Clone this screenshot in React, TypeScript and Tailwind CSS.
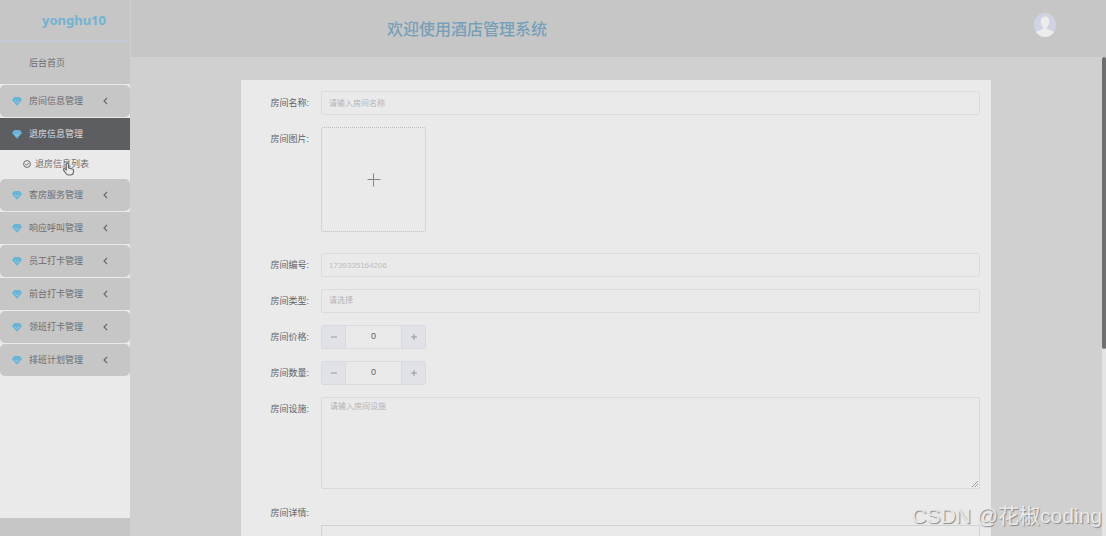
import { useState } from "react";
import clsx from "clsx";

const menus = [
  { title: "房间信息管理", rounded: true },
  { title: "退房信息管理", active: true, children: ["退房信息列表"] },
  { title: "客房服务管理", rounded: true },
  { title: "响应呼叫管理" },
  { title: "员工打卡管理", rounded: true },
  { title: "前台打卡管理" },
  { title: "领班打卡管理", rounded: true },
  { title: "排班计划管理", rounded: true },
];

const fieldClass =
  "block w-full h-6 rounded-[2px] border border-[#dcdcdf] bg-transparent px-[7px] text-[8px] text-[#77787c] outline-none placeholder:text-[#b3b4b9]";

function GemIcon() {
  return (
    <svg viewBox="0 0 20 18" className="w-[10px] h-[9px] shrink-0">
      <path d="M4.500 1h11l3.500 5-9 10.500L1 6z" fill="#66b5d8" stroke="#66b5d8" strokeWidth="2" strokeLinejoin="round" />
      <path d="M5.500 7.500l4.500 4 4.500-4" fill="none" stroke="#b4d0dc" strokeWidth="1.4" />
    </svg>
  );
}

function ChevronIcon() {
  return (
    <svg viewBox="0 0 6 10" className="w-[5px] h-2" fill="none" stroke="#66676a" strokeWidth="1.5">
      <path d="M5 1L1.2 5 5 9" />
    </svg>
  );
}

function CheckIcon() {
  return (
    <svg viewBox="0 0 16 16" className="w-2 h-2 shrink-0" fill="none" stroke="#5c5d60" strokeWidth="1.8">
      <circle cx="8" cy="8" r="6.8" />
      <path d="M4.5 7.8l2.6 2.6 4.6-4.6" />
    </svg>
  );
}

function Cursor() {
  return (
    <svg
      viewBox="0 0 20 24"
      className="absolute left-[63px] top-3 w-[11px] h-[14px]"
      fill="#ececec"
      stroke="#66676b"
      strokeWidth="2"
      strokeLinejoin="round"
    >
      <path d="M6 14V3.500a2 2 0 0 1 4 0V10l7 2a2 2 0 0 1 2 2v3c0 4-2 6-6 6h-3c-3 0-4-2-6-5l-3-4c-1-2 1-4 3-2z" />
    </svg>
  );
}

function Sidebar() {
  return (
    <aside className="w-[130px] shrink-0 bg-[#c6c6c6] pb-[18px] flex flex-col">
      <div className="h-10 shrink-0 pl-[18px] pt-0.5 flex items-center justify-center text-[13px] font-bold text-[#70b4d4] font-['Noto_Sans',sans-serif]">
        yonghu10
      </div>
      <nav className="flex-1 border-t-2 border-[#c5c8d5] bg-[#eaeaea] text-[9px] text-[#6c6d70]">
        <a href="#home" className="flex h-[42px] items-center bg-[#c6c6c6] pl-[29px] pt-0.5">
          后台首页
        </a>
        <ul className="flex flex-col gap-px pt-px">
          {menus.map((menu) => (
            <li key={menu.title}>
              <button
                type="button"
                className={clsx(
                  "flex h-8 w-full items-center pl-3",
                  menu.active ? "bg-[#5d5e62] text-[#dedee0]" : "bg-[#c6c6c6]",
                  menu.rounded && "rounded-[5px]"
                )}
              >
                <GemIcon />
                <span className="ml-[7px] w-[74px] pt-0.5 text-left">{menu.title}</span>
                {!menu.active && <ChevronIcon />}
              </button>
              {menu.children?.map((child) => (
                <a key={child} href="#list" className="relative flex h-7 items-center gap-1 pl-[23px]">
                  <CheckIcon />
                  <span className="pt-0.5">{child}</span>
                  <Cursor />
                </a>
              ))}
            </li>
          ))}
        </ul>
      </nav>
    </aside>
  );
}

function FormRow({ label, htmlFor, children }: { label: string; htmlFor: string; children: React.ReactNode }) {
  return (
    <div className="flex items-start">
      <label htmlFor={htmlFor} className="w-20 shrink-0 pr-3 text-right text-[9px] leading-6 text-[#626367]">
        {label}:
      </label>
      <div className="min-w-0 flex-1">{children}</div>
    </div>
  );
}

function NumberInput({ id }: { id: string }) {
  const [value, setValue] = useState(0);
  const buttonClass = "flex w-[23px] items-center justify-center bg-[#e1e2e8] text-[#86878b]";
  return (
    <div className="flex h-6 w-[105px] overflow-hidden rounded-[2px] border border-[#d9dae0]">
      <button type="button" aria-label="减少" className={buttonClass} onClick={() => setValue(Math.max(0, value - 1))}>
        <svg viewBox="0 0 8 8" className="w-2 h-2" stroke="currentColor" strokeWidth="0.8">
          <path d="M1 4h6" />
        </svg>
      </button>
      <input
        id={id}
        value={value}
        onChange={(e) => setValue(Number(e.target.value) || 0)}
        className="min-w-0 flex-1 border-x border-[#d9dae0] text-center text-[9px] text-[#606165] outline-none"
      />
      <button type="button" aria-label="增加" className={buttonClass} onClick={() => setValue(value + 1)}>
        <svg viewBox="0 0 8 8" className="w-2 h-2" stroke="currentColor" strokeWidth="0.8">
          <path d="M1 4h6M4 1v6" />
        </svg>
      </button>
    </div>
  );
}

function RoomForm() {
  return (
    <form className="flex flex-col gap-3 bg-[#eaeaea] pt-[11px] pr-[11px]">
      <FormRow label="房间名称" htmlFor="name">
        <input id="name" placeholder="请输入房间名称" className={fieldClass} />
      </FormRow>
      <FormRow label="房间图片" htmlFor="image">
        <button
          id="image"
          type="button"
          aria-label="上传图片"
          className="mb-[9px] flex h-[105px] w-[105px] items-center justify-center rounded-[3px] border border-dotted border-[#bcbdc0]"
        >
          <svg viewBox="0 0 14 14" className="w-[14px] h-[14px]" stroke="#85868d" strokeWidth="1">
            <path d="M0.500 6.500h13M6.500 0.500v13" />
          </svg>
        </button>
      </FormRow>
      <FormRow label="房间编号" htmlFor="code">
        <input id="code" disabled defaultValue="1739335164206" className={clsx(fieldClass, "text-[#bcbdc1]!")} />
      </FormRow>
      <FormRow label="房间类型" htmlFor="type">
        <select id="type" defaultValue="" className={clsx(fieldClass, "appearance-none text-[#b3b4b9]!")}>
          <option value="">请选择</option>
        </select>
      </FormRow>
      <FormRow label="房间价格" htmlFor="price">
        <NumberInput id="price" />
      </FormRow>
      <FormRow label="房间数量" htmlFor="count">
        <NumberInput id="count" />
      </FormRow>
      <FormRow label="房间设施" htmlFor="facility">
        <div className="relative">
          <textarea
            id="facility"
            placeholder="请输入房间设施"
            className="block h-[92px] w-full resize-none rounded-[2px] border border-[#d9dae0] px-2 py-[3px] text-[8px] text-[#606165] outline-none placeholder:text-[#b3b4b9]"
          />
          <svg viewBox="0 0 6 6" className="absolute right-0.5 bottom-0.5 w-1.5 h-1.5" stroke="#97979a" strokeWidth="0.9">
            <path d="M0 6L6 0M3 6l3-3" />
          </svg>
        </div>
      </FormRow>
      <FormRow label="房间详情" htmlFor="detail">
        <textarea id="detail" className="mt-6 block h-40 w-full resize-none border border-[#d2d2d3] outline-none" />
      </FormRow>
    </form>
  );
}

export default function App() {
  return (
    <div className="relative flex h-screen overflow-hidden bg-[#d0d0d0] font-['Liberation_Sans','Noto_Sans_CJK_SC',sans-serif]">
      <Sidebar />
      <div className="flex min-w-0 flex-1 flex-col">
        <header className="flex h-[57px] shrink-0 items-center justify-between border-l border-[#cfcfcf] bg-[#c6c6c6] pl-64 pr-[50px]">
          <h1 className="pt-0.5 text-base font-medium text-[#779fb9]">欢迎使用酒店管理系统</h1>
          <svg viewBox="0 0 22 24" className="mb-2 w-[22px] h-6" role="img" aria-label="avatar">
            <clipPath id="avatar">
              <ellipse cx="11" cy="12" rx="11" ry="12" />
            </clipPath>
            <g clipPath="url(#avatar)">
              <path d="M0 0h22v24H0z" fill="#d0d4e2" />
              <path
                d="M11 3.500c-3 0-4.500 2-4.300 5 .1 2.500 1 4.300 2.300 5.500v2c-2 1.300-5 1.500-7 3V24h18v-5c-2-1.500-5-1.700-7-3v-2c1.300-1.200 2.200-3 2.300-5.500.2-3-1.300-5-4.300-5z"
                fill="#ececec"
              />
            </g>
          </svg>
        </header>
        <div className="flex min-h-0 flex-1">
          <main className="min-w-0 flex-1 overflow-hidden px-[111px] pt-[23px]">
            <RoomForm />
          </main>
          <div className="w-1 shrink-0 bg-[#e4e4e4]">
            <div className="h-[61%] rounded-full bg-[#6e6e6e]" />
          </div>
        </div>
      </div>
      <div className="pointer-events-none absolute right-1 bottom-1 text-[21px] leading-8 text-[#e9e9e9] [text-shadow:1px_1px_1px_#888]">
        CSDN @花椒coding
      </div>
    </div>
  );
}
